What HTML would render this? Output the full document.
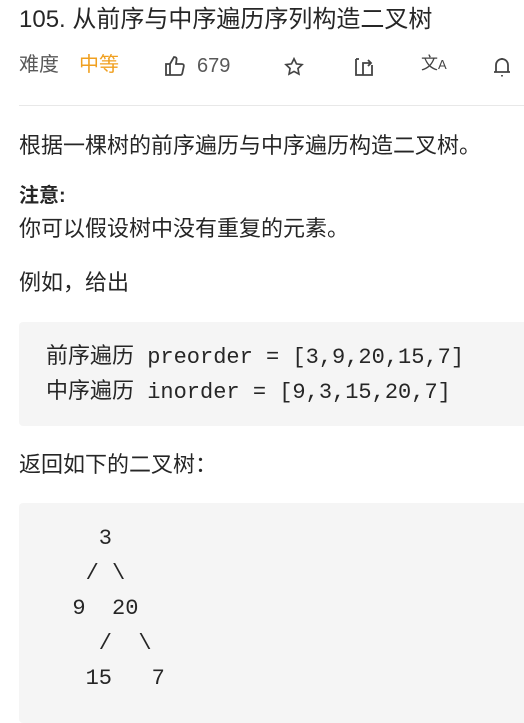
<!DOCTYPE html><html><head><meta charset="utf-8"><style>
body{margin:0;width:524px;height:708px;overflow:hidden;background:#fff;font-family:"Liberation Sans","Noto Sans CJK SC",sans-serif;color:#262626;position:relative}
.a{position:absolute;white-space:nowrap;line-height:1.2}
.code{position:absolute;left:19px;width:520px;background:#f5f5f5;border-radius:4px;font-family:"Liberation Mono","Noto Sans CJK SC",monospace;font-size:22px;color:#262626}
svg{position:absolute}
</style></head><body>
<div class="a" style="left:19px;top:6px;font-size:24px;color:#262626">105. 从前序与中序遍历序列构造二叉树</div>
<div class="a" style="left:19px;top:53px;font-size:20px;color:#595959">难度</div>
<div class="a" style="left:79px;top:53px;font-size:20px;color:#f0a020">中等</div>
<svg style="left:163px;top:54px" width="24" height="24" viewBox="0 0 24 24" fill="none" stroke="#444" stroke-width="1.8"><path d="M3 10h4v11H3zM7 10l4-7c2 0 3 1 2.5 3L13 10h6c1.5 0 2 1 1.8 2.2l-1.5 7c-.3 1-1 1.8-2 1.8H7"/></svg>
<div class="a" style="left:197px;top:54px;font-size:20px;color:#595959">679</div>
<svg style="left:283px;top:56px" width="22" height="22" viewBox="0 0 24 24" fill="none" stroke="#444" stroke-width="1.8"><path d="M12 3l2.7 5.6 6.1.8-4.5 4.2 1.1 6.1L12 16.8l-5.4 2.9 1.1-6.1-4.5-4.2 6.1-.8z"/></svg>
<svg style="left:352px;top:55px" width="24" height="24" viewBox="0 0 24 24" fill="none" stroke="#444" stroke-width="1.8"><path d="M4 4v16h16V10M4 4h3M11 20V8h8M16 5l3 3-3 3"/></svg>
<div class="a" style="left:421px;top:54px;font-size:17px;color:#444">文<span style="font-size:13px">A</span></div>
<svg style="left:491px;top:55px" width="22" height="24" viewBox="0 0 22 24" fill="none" stroke="#444" stroke-width="1.8"><path d="M5 17V10a6 6 0 0 1 12 0v7M3 17h16M11 20v1.5M11 3v1"/></svg>
<div style="position:absolute;left:19px;top:105px;width:505px;height:1px;background:#e8e8e8"></div>
<div class="a" style="left:19px;top:133px;font-size:22px">根据一棵树的前序遍历与中序遍历构造二叉树。</div>
<div class="a" style="left:19px;top:184px;font-size:20px;font-weight:bold">注意:</div>
<div class="a" style="left:19px;top:216px;font-size:22px">你可以假设树中没有重复的元素。</div>
<div class="a" style="left:19px;top:270px;font-size:22px">例如，给出</div>
<div class="code" style="top:322px;height:104px"><div class="a" style="left:27px;top:18px;line-height:35px">前序遍历 preorder = [3,9,20,15,7]<br>中序遍历 inorder = [9,3,15,20,7]</div></div>
<div class="a" style="left:19px;top:452px;font-size:22px">返回如下的二叉树：</div>
<div class="code" style="top:503px;height:220px"><pre style="position:absolute;margin:0;left:27px;top:18px;line-height:35px;font-family:inherit;font-size:22px;white-space:pre">    3
   / \
  9  20
    /  \
   15   7</pre></div>
</body></html>
